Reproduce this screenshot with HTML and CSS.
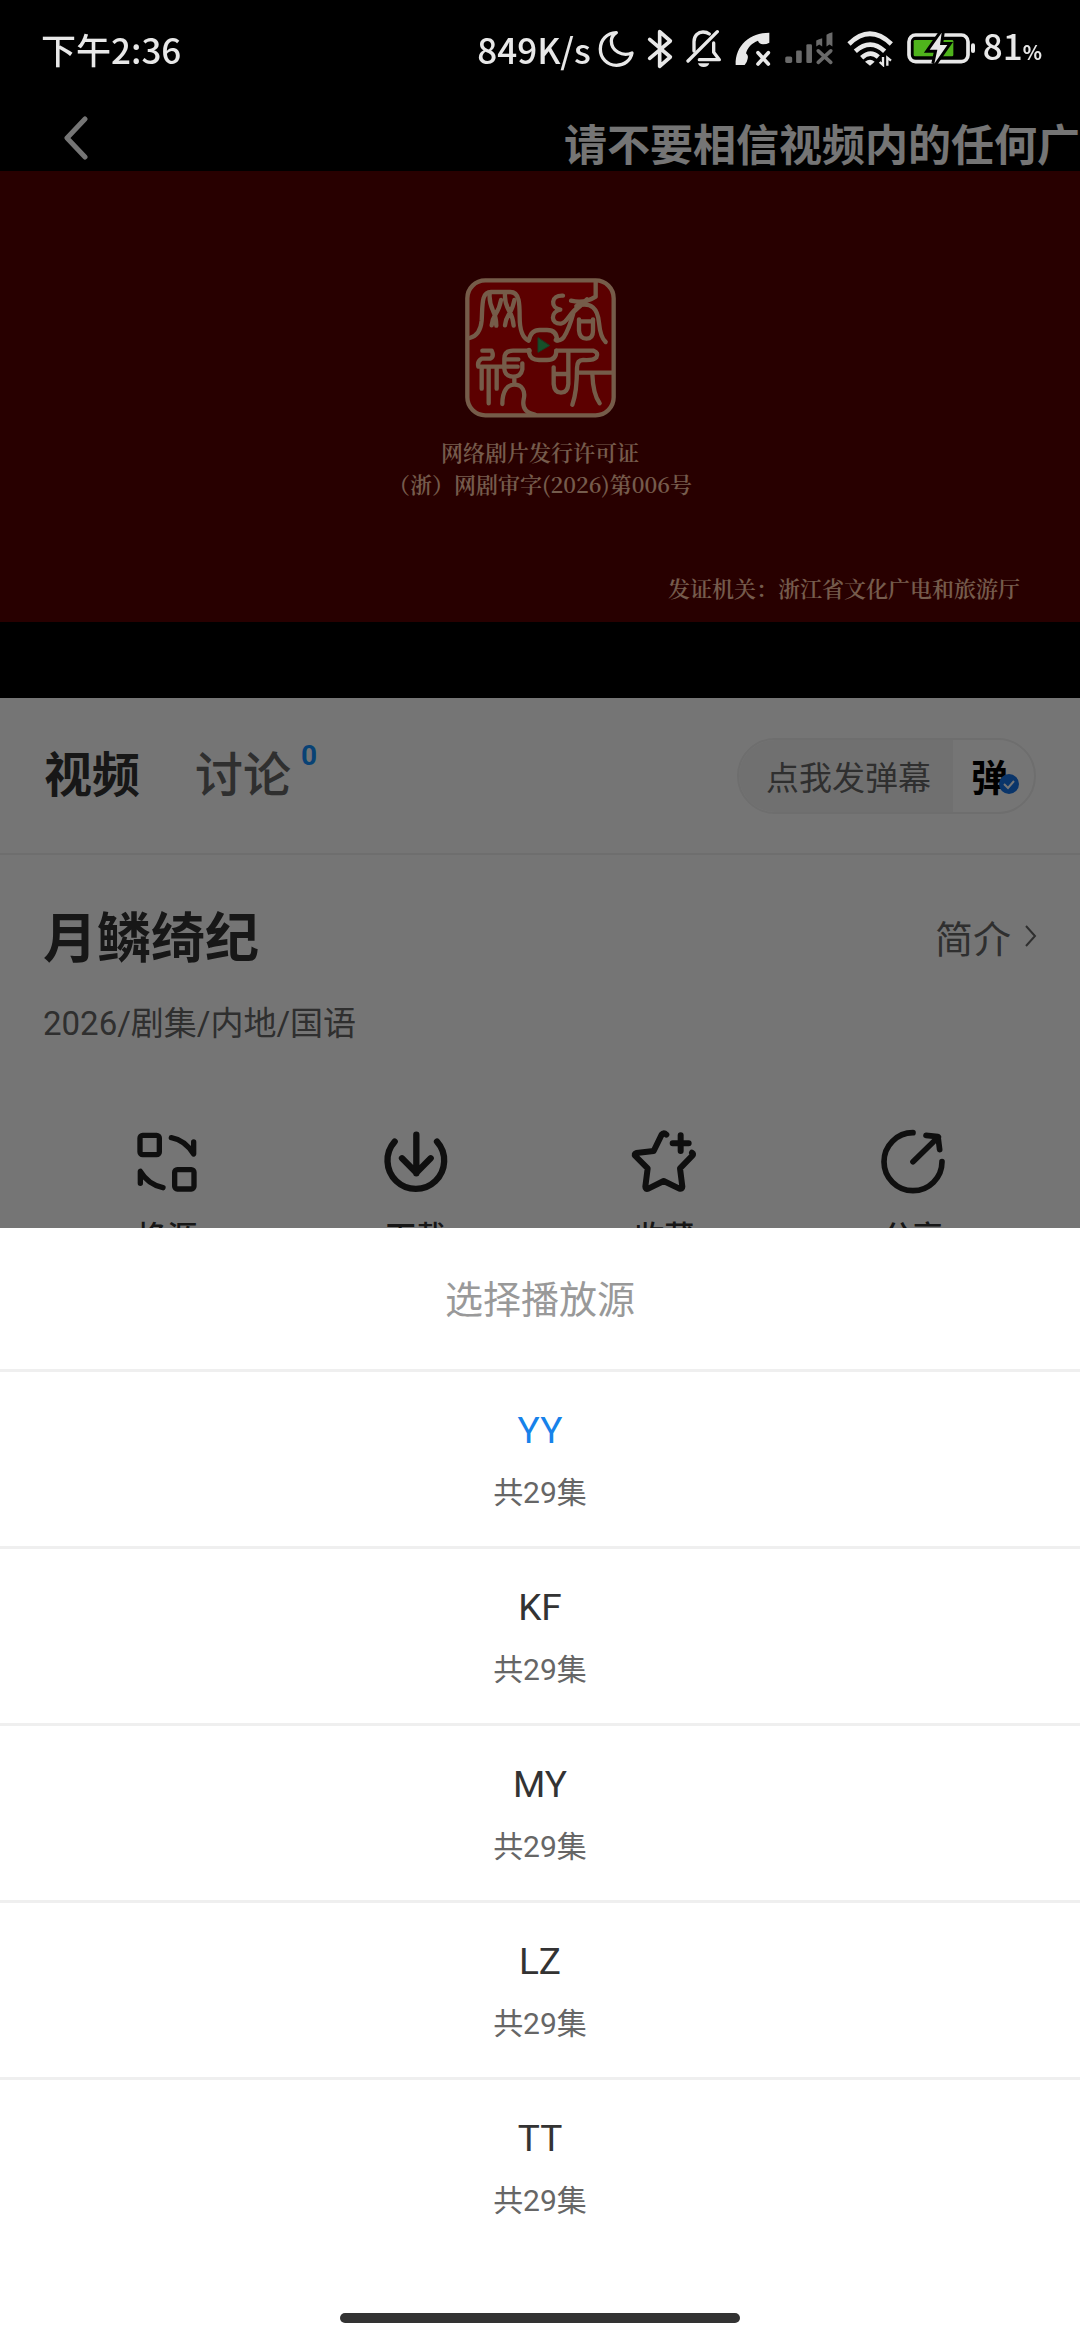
FILE: index.html
```html
<!DOCTYPE html>
<html lang="zh-CN">
<head>
  <meta charset="UTF-8" />
  <meta name="viewport" content="width=device-width, initial-scale=1.0" />
  <title>月鳞绮纪</title>
  <link rel="stylesheet" href="styles.css">
</head>
<body>
  <header class="status-bar">
    <span class="status-time">下午2:36</span>
    <div class="status-icons">
      <span class="net-speed">849K/s</span>
      <svg class="icon-moon" viewBox="0 0 108 114" width="36" height="38" fill="none" stroke="currentColor" stroke-width="10" stroke-linejoin="round">
        <path d="M55 8C26 9 7 30 7 57c0 28 21 49 48 49 24 0 43-15 47-37-30 12-62-7-62-36 0-11 6-19 15-25Z"/>
      </svg>
      <svg class="icon-bluetooth" viewBox="0 0 78 120" width="26" height="40" fill="none" stroke="currentColor" stroke-width="11" stroke-linecap="round" stroke-linejoin="round">
        <path d="M8 31 70 84 38 112V8l32 28L8 88"/>
      </svg>
      <svg class="icon-bell" viewBox="0 0 108 117" width="36" height="39" fill="none" stroke="currentColor" stroke-width="10" stroke-linecap="round" stroke-linejoin="round">
        <path d="M24 66V38C24 19 37 9 51 9c8 0 14 2 19 6"/>
        <path d="M6 96 94 8"/>
        <path d="M40 92h60L83 70V42"/>
        <path d="M36 103h34q-3 11-17 11t-17-11Z" fill="currentColor" stroke="none"/>
      </svg>
      <svg class="icon-call" viewBox="0 0 108 102" width="36" height="34">
        <path d="M2 99C0 40 45 2 103 2v30q-8 5-19 5-12-1-15-11C50 34 38 46 33 64q8 7 5 16-2 12-9 19Z" fill="currentColor"/>
        <path d="m69 62 31 34M100 62 69 96" stroke="currentColor" stroke-width="11" stroke-linecap="round"/>
      </svg>
      <svg class="icon-signal" viewBox="0 0 150 100" width="50" height="33" fill="currentColor">
        <rect x="3" y="74" width="21" height="20" rx="5"/>
        <rect x="36" y="56" width="17" height="38" rx="4"/>
        <rect x="67" y="37" width="17" height="57" rx="4"/>
        <path d="M97 26q8-5 18-7v25l-9-6-9 6ZM128 8q8-5 18-7v43l-9-6-9 6Z"/>
        <path d="m103 57 38 35M141 57l-38 35" stroke="currentColor" stroke-width="11" stroke-linecap="round"/>
      </svg>
      <svg class="icon-wifi" viewBox="0 0 141 108" width="47" height="36" fill="none" stroke="currentColor" stroke-width="14">
        <path d="M6 39Q68-22 133 39M25 61q45-40 88 0M44 80q26-23 50-2"/>
        <path d="M54 92q15-12 29 0L69 104Z" fill="currentColor" stroke="none"/>
        <path d="M108 78v24l-10-9M121 104V80l11 9" stroke-width="7"/>
      </svg>
      <svg class="icon-battery" viewBox="0 0 207 93" width="69" height="31">
        <rect x="6" y="6" width="177" height="80" rx="20" fill="none" stroke="currentColor" stroke-width="11"/>
        <rect x="20" y="21" width="119" height="49" rx="4" fill="#4fb31c"/>
        <rect x="192" y="31" width="12" height="29" rx="6" fill="currentColor"/>
        <path d="M104-1 68 50h23l-9 42 39-56H99Z" fill="currentColor" stroke="#000" stroke-width="18" paint-order="stroke"/>
      </svg>
      <span class="battery-level">81<small>%</small></span>
    </div>
  </header>

  <main class="app">
    <section class="player">
      <div class="player-top">
        <button class="back-btn" type="button" aria-label="返回">
          <svg viewBox="0 0 24 44" width="24" height="44" fill="none" stroke="currentColor" stroke-width="5" stroke-linecap="round" stroke-linejoin="round">
            <path d="M21 3 3 22l18 19"/>
          </svg>
        </button>
        <p class="marquee">请不要相信视频内的任何广</p>
      </div>
      <div class="video">
        <svg class="seal" viewBox="74 54 453 420" width="151" height="140" fill="none" stroke="#ffc8a0" stroke-width="13" stroke-linecap="round" stroke-linejoin="round">
          <rect x="81" y="61" width="439" height="405" rx="54" fill="#c80000"/>
          <!-- top left -->
          <path d="M88 234q32-8 36-52c3-45-2-86 28-86h58c28 0 28 36 28 76 0 44 10 62 26 70"/>
          <path d="M148 102q-2 24 10 50 10 20 10 45M182 120q-4 24-16 42-10 16-12 34M194 102q-2 24 12 50 12 20 14 45M222 120q-4 24-16 42-10 16-12 34"/>
          <!-- top right -->
          <path d="M368 107c-38-2-38 36-8 42-30 6-30 44 2 42 20-2 24-34 58-54"/>
          <path d="M466 64v46q-34 22-74 12M440 118q-22 22-40 38-14 52-30 76-10 12-24 8M408 138c46-14 64 8 68 50q4 44 20 58"/>
          <path d="M416 178v34q2 24 22 24t20-24v-34M416 184h42"/>
          <!-- play mark in the middle -->
          <path d="M266 240q6-30 32-30h22q30 0 30 32M266 270v8q4 22 30 22h24q28 0 28-28"/>
          <path d="M293 234v43l34-20Z" fill="#2fae5b" stroke="#2f8a50" stroke-width="3"/>
          <!-- bottom left -->
          <path d="M126 272h28q8 18-4 24h-26q-14 8-10 24h118M124 324v62M145 324v106M169 324v62"/>
          <path d="M268 272h-50q-26 0-26 24v30q2 24 26 24t28-22v-18M196 298h38M222 350v18M186 432c0-40 16-58 36-58 24 0 34 20 28 44-6 30 12 42 34 46"/>
          <!-- bottom right -->
          <path d="M340 322v50q2 26 22 26t22-26V272M342 342h40M348 272h112q16 6 8 20-8 10-40 8-18 0-18 24 0 72-14 110M414 338h102M456 342q2 60 22 88"/>
        </svg>
        <p class="license">网络剧片发行许可证</p>
        <p class="license">（浙）网剧审字(2026)第006号</p>
        <p class="issuer">发证机关：浙江省文化广电和旅游厅</p>
      </div>
    </section>

    <nav class="tabs">
      <a class="tab active" href="#video">视频</a>
      <a class="tab" href="#discuss">讨论<sup class="tab-count">0</sup></a>
      <div class="danmu">
        <button class="danmu-send" type="button">点我发弹幕</button>
        <button class="danmu-toggle" type="button">弹
          <svg class="danmu-check" viewBox="0 0 22 22" width="22" height="22">
            <circle cx="11" cy="11" r="10" fill="#1673e6"/>
            <path d="m6 11 4 4 6-7" fill="none" stroke="#fff" stroke-width="2"/>
          </svg>
        </button>
      </div>
    </nav>

    <section class="info">
      <div class="info-head">
        <h1>月鳞绮纪</h1>
        <a class="intro-link" href="#intro">简介
          <svg viewBox="0 0 12 22" width="12" height="22" fill="none" stroke="currentColor" stroke-width="2">
            <path d="m1 1 9 10-9 10"/>
          </svg>
        </a>
      </div>
      <p class="meta">2026/剧集/内地/国语</p>
      <div class="actions">
        <button class="action" type="button">
          <svg viewBox="-7 -7 198 198" width="66" height="66" stroke-width="16">
            <rect x="11" y="12" width="58" height="58" rx="8"/>
            <rect x="115" y="115" width="58" height="58" rx="8"/>
            <path d="M105 19q40 7 67 49V32M80 169q-45-10-68-49v36"/>
          </svg>
          <span>换源</span>
        </button>
        <button class="action" type="button">
          <svg viewBox="0 -5 198 198" width="66" height="66" stroke-width="19">
            <path d="M35 33a85 85 0 1 0 127 0M100 12v116M57 83l43 43 43-43"/>
          </svg>
          <span>下载</span>
        </button>
        <button class="action" type="button">
          <svg viewBox="0 -2 198 198" width="66" height="66" stroke-width="18">
            <path d="M106 15q-8-8-14 0L68 64l-52 6q-8 3-3 9l37 37-7 55q0 9 9 6l46-23 47 23q9 2 9-6l-7-55 37-38q5-5-1-9M149 17v47M125 41h48"/>
          </svg>
          <span>收藏</span>
        </button>
        <button class="action" type="button">
          <svg viewBox="-1 0 198 198" width="66" height="66" stroke-width="17">
            <path d="M98 11a87 87 0 1 0 87 87M98 98l76-74M137 19l36 4 5 39"/>
          </svg>
          <span>分享</span>
        </button>
      </div>
    </section>
  </main>

  <!-- source picker -->
  <div class="overlay">
    <div class="sheet" role="dialog" aria-labelledby="sheet-title">
      <h2 class="sheet-title" id="sheet-title">选择播放源</h2>
      <button class="source selected" type="button"><span class="source-name">YY</span><span class="source-count">共29集</span></button>
      <button class="source" type="button"><span class="source-name">KF</span><span class="source-count">共29集</span></button>
      <button class="source" type="button"><span class="source-name">MY</span><span class="source-count">共29集</span></button>
      <button class="source" type="button"><span class="source-name">LZ</span><span class="source-count">共29集</span></button>
      <button class="source" type="button"><span class="source-name">TT</span><span class="source-count">共29集</span></button>
      <div class="home-area"><div class="home-bar"></div></div>
    </div>
  </div>
</body>
</html>
```

FILE: styles.css
```css
* {
  box-sizing: border-box;
}

body {
  margin: 0;
  min-height: 100vh;
  background: #fff;
  color: #333;
  font-family: Roboto, "Noto Sans CJK SC", sans-serif;
  overflow: hidden;
}

h1, h2, p {
  margin: 0;
}

button {
  padding: 0;
  border: none;
  background: none;
  color: inherit;
  font-family: inherit;
  cursor: pointer;
}

a {
  color: inherit;
  text-decoration: none;
}

svg {
  display: block;
  flex: none;
}

/* Status bar, stays bright above the overlay */
.status-bar {
  position: relative;
  z-index: 2;
  display: flex;
  justify-content: space-between;
  align-items: center;
  height: 97px;
  padding: 0 38px 0 41px;
  color: #e8e8e8;
  font-family: "Noto Sans CJK SC", sans-serif;
  font-size: 35px;
  font-weight: 500;
  line-height: 48px;
}

.status-icons {
  display: flex;
  align-items: center;
  gap: 13px;
}

.net-speed {
  margin-right: -6px;
}

.icon-signal {
  color: #6a6a6a;
}

.battery-level {
  margin-left: -6px;
}

.battery-level small {
  font-size: 20px;
  font-weight: bold;
}

/* Player */
.player {
  margin-top: -97px;
  padding: 97px 0 76px;
  background: #000;
  color: #fff;
}

.player-top {
  display: flex;
  justify-content: space-between;
  align-items: flex-end;
  height: 74px;
  padding-left: 64px;
}

.back-btn {
  margin-bottom: 11px;
}

.marquee {
  white-space: nowrap;
  font-size: 43px;
  font-weight: bold;
  line-height: 50px;
}

.video {
  display: flex;
  flex-direction: column;
  align-items: center;
  padding: 107px 60px 18px;
  background: #580000;
  color: #ffc8a8;
  font-family: "Noto Serif CJK SC", "Noto Sans CJK SC", serif;
  font-size: 22px;
  font-weight: 600;
  line-height: 32px;
}

.seal {
  margin-bottom: 18px;
}

.issuer {
  align-self: flex-end;
  margin-top: 72px;
}

/* Tabs */
.tabs {
  display: flex;
  align-items: center;
  gap: 55px;
  height: 157px;
  padding: 0 44px;
  border-bottom: 2px solid #f0f0f0;
}

.tab {
  position: relative;
  padding-bottom: 10px;
  color: #666;
  font-size: 48px;
  font-weight: 500;
}

.tab.active {
  color: #333;
  font-weight: bold;
}

.tab-count {
  position: absolute;
  top: 0;
  left: 100%;
  margin-left: 10px;
  color: #1290ff;
  font-size: 28px;
  font-weight: bold;
  line-height: 40px;
}

.danmu {
  display: flex;
  height: 76px;
  margin-left: auto;
  border: 2px solid #efefef;
  border-radius: 38px;
  overflow: hidden;
}

.danmu-send {
  padding: 0 22px 0 27px;
  background: #f5f5f5;
  color: #666;
  font-size: 33px;
}

.danmu-toggle {
  position: relative;
  width: 81px;
  padding-right: 8px;
  color: #000;
  font-size: 37px;
  font-weight: bold;
}

.danmu-check {
  position: absolute;
  right: 14px;
  bottom: 17px;
}

/* Title and actions */
.info {
  padding: 45px 43px;
}

.info-head {
  display: flex;
  justify-content: space-between;
  align-items: center;
}

.info-head h1 {
  font-size: 54px;
  line-height: 80px;
}

.intro-link {
  display: flex;
  align-items: center;
  gap: 14px;
  padding-bottom: 8px;
  color: #666;
  font-size: 38px;
}

.meta {
  margin-top: 19px;
  color: #666;
  font-size: 33px;
  line-height: 50px;
}

.actions {
  display: grid;
  grid-template-columns: repeat(4, 1fr);
  margin-top: 80px;
}

.action {
  display: flex;
  flex-direction: column;
  align-items: center;
  gap: 20px;
  font-size: 30px;
  font-weight: 500;
  line-height: 44px;
}

.action svg {
  fill: none;
  stroke: #222;
  stroke-linecap: round;
  stroke-linejoin: round;
}

/* Bottom sheet */
.overlay {
  position: fixed;
  inset: 0;
  z-index: 1;
  display: flex;
  flex-direction: column;
  justify-content: flex-end;
  background: rgba(0, 0, 0, 0.54);
}

.sheet {
  display: flex;
  flex-direction: column;
  background: #fff;
}

.sheet-title {
  padding: 44px 0 41px;
  color: #999;
  font-size: 38px;
  font-weight: normal;
  line-height: 56px;
  text-align: center;
}

.source {
  display: flex;
  flex-direction: column;
  align-items: center;
  gap: 11px;
  padding: 31px 0;
  border-top: 3px solid #efefef;
  color: #333;
}

.source-name {
  font-size: 37px;
  line-height: 56px;
}

.source-count {
  color: #666;
  font-size: 30px;
  line-height: 45px;
}

.source.selected .source-name {
  color: #1782ea;
}

.home-area {
  padding: 59px 0 17px;
}

.home-bar {
  width: 37%;
  height: 10px;
  margin: 0 auto;
  border-radius: 5px;
  background: #333;
}
```
